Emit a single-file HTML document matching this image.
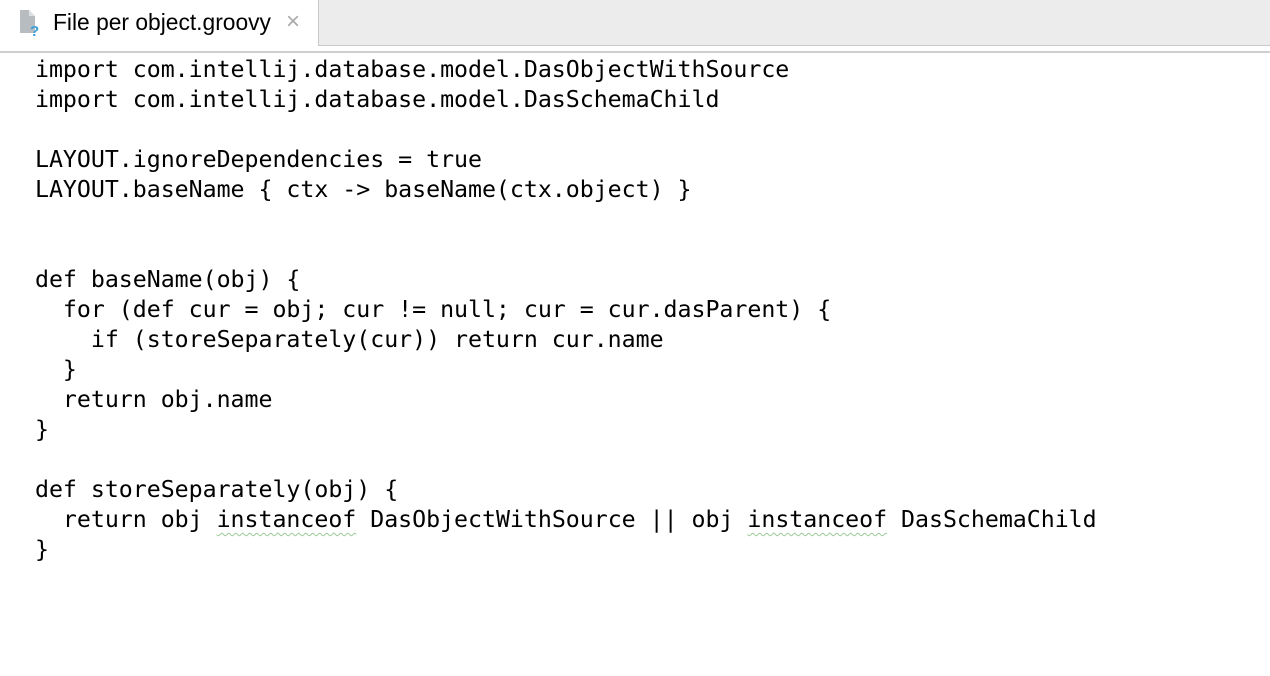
<!DOCTYPE html>
<html><head><style>
body{margin:0;width:1270px;height:676px;background:#fff;overflow:hidden;position:relative;font-family:"Liberation Sans",sans-serif}
.gray{position:absolute;left:318px;top:0;width:952px;height:45px;background:#ececec;border-left:1px solid #c9c9c9;border-bottom:1px solid #c9c9c9}
.line{position:absolute;left:0;top:51px;width:1270px;height:2px;background:#cfcfcf}
.tab{position:absolute;left:53px;top:9px;font-size:22.8px;color:#000}
.x{position:absolute;left:286px;top:8px;font-size:24px;color:#aaa}
pre{position:absolute;left:35px;top:55px;margin:0;font-family:"DejaVu Sans Mono",monospace;font-size:23.25px;letter-spacing:-0.03px;line-height:30px;color:#000}
.w{text-decoration:underline wavy #9c9;text-underline-offset:5px;text-decoration-thickness:1px}
</style></head><body>
<div class="gray"></div><div class="line"></div>
<svg style="position:absolute;left:19px;top:9px" width="22" height="28"><path d="M1 1h9l6 6v17H1z" fill="#b7bcc0"/><path d="M10 1v6h6" fill="#dde0e2"/><text x="11" y="27" font-size="15" font-weight="bold" fill="#3a9fd8" font-family="Liberation Sans">?</text></svg>
<div class="tab">File per object.groovy</div>
<div class="x">×</div>
<pre>import com.intellij.database.model.DasObjectWithSource
import com.intellij.database.model.DasSchemaChild

LAYOUT.ignoreDependencies = true
LAYOUT.baseName { ctx -&gt; baseName(ctx.object) }


def baseName(obj) {
  for (def cur = obj; cur != null; cur = cur.dasParent) {
    if (storeSeparately(cur)) return cur.name
  }
  return obj.name
}

def storeSeparately(obj) {
  return obj <span class="w">instanceof</span> DasObjectWithSource || obj <span class="w">instanceof</span> DasSchemaChild
}</pre>
</body></html>
